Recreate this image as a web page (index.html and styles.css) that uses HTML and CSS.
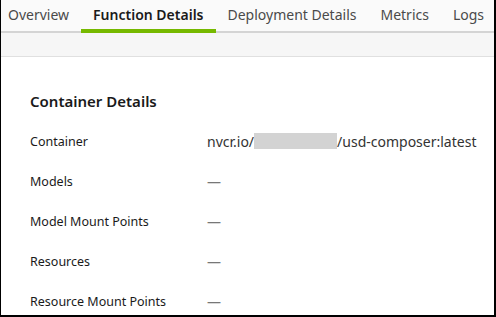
FILE: index.html
```html
<!DOCTYPE html>
<html lang="en">
<head>
  <meta charset="UTF-8" />
  <title>Function Details</title>
  <link rel="stylesheet" href="styles.css">
</head>
<body>
  <div class="frame">
    <nav class="tabs">
      <span class="tab first">Overview</span>
      <span class="tab active">Function Details</span>
      <span class="tab">Deployment Details</span>
      <span class="tab">Metrics</span>
      <span class="tab">Logs</span>
    </nav>
    <div class="band"></div>

    <main class="content">
      <h2>Container Details</h2>
      <dl class="details">
        <div class="row">
          <dt>Container</dt>
          <dd>nvcr.io/<span class="redacted"></span>/usd-composer:latest</dd>
        </div>
        <div class="row">
          <dt>Models</dt>
          <dd class="empty">—</dd>
        </div>
        <div class="row">
          <dt>Model Mount Points</dt>
          <dd class="empty">—</dd>
        </div>
        <div class="row">
          <dt>Resources</dt>
          <dd class="empty">—</dd>
        </div>
        <div class="row">
          <dt>Resource Mount Points</dt>
          <dd class="empty">—</dd>
        </div>
      </dl>
    </main>
  </div>
</body>
</html>
```

FILE: styles.css
```css
:root {
  --green: #76b900;
  --text: #1a1a1a;
  --muted: #4a4a4a;
  --line: #d4d4d4;
}

body {
  margin: 0;
  font-family: 'Noto Sans', sans-serif;
  color: var(--text);
  background: #fff;
}

.frame {
  width: 496px;
  height: 317px;
  box-sizing: border-box;
  border-left: 1px solid #000;
  border-right: 2px solid #000;
  border-bottom: 2px solid #000;
  overflow: hidden;
}

.tabs {
  display: flex;
  height: 31px;
  background: #fafafa;
  border-bottom: 2px solid var(--line);
}

.tab {
  padding: 0 12px;
  font-size: 14px;
  line-height: 29px;
  color: var(--muted);
  white-space: nowrap;
  border-bottom: 4px solid transparent;
  margin-bottom: -2px;
}

.tab.first {
  padding-left: 7px;
}

.tab.active {
  font-weight: 600;
  color: var(--text);
  border-bottom-color: var(--green);
}

.band {
  height: 23px;
  background: #f6f6f6;
  border-bottom: 1px solid #e0e0e0;
}

.content {
  padding: 0 29px;
}

h2 {
  margin: 33px 0 9px;
  font-size: 15px;
  font-weight: 600;
  line-height: 22px;
}

.details {
  margin: 0;
}

.row {
  display: flex;
  height: 40px;
  align-items: center;
  font-size: 12.5px;
}

dt {
  width: 177px;
  flex-shrink: 0;
}

dd {
  margin: 0;
  font-size: 14px;
  color: #333;
  white-space: nowrap;
  display: flex;
  align-items: center;
}

.redacted {
  display: inline-block;
  width: 83px;
  height: 16px;
  background: #d3d3d3;
}

.empty {
  color: #777;
}
```
